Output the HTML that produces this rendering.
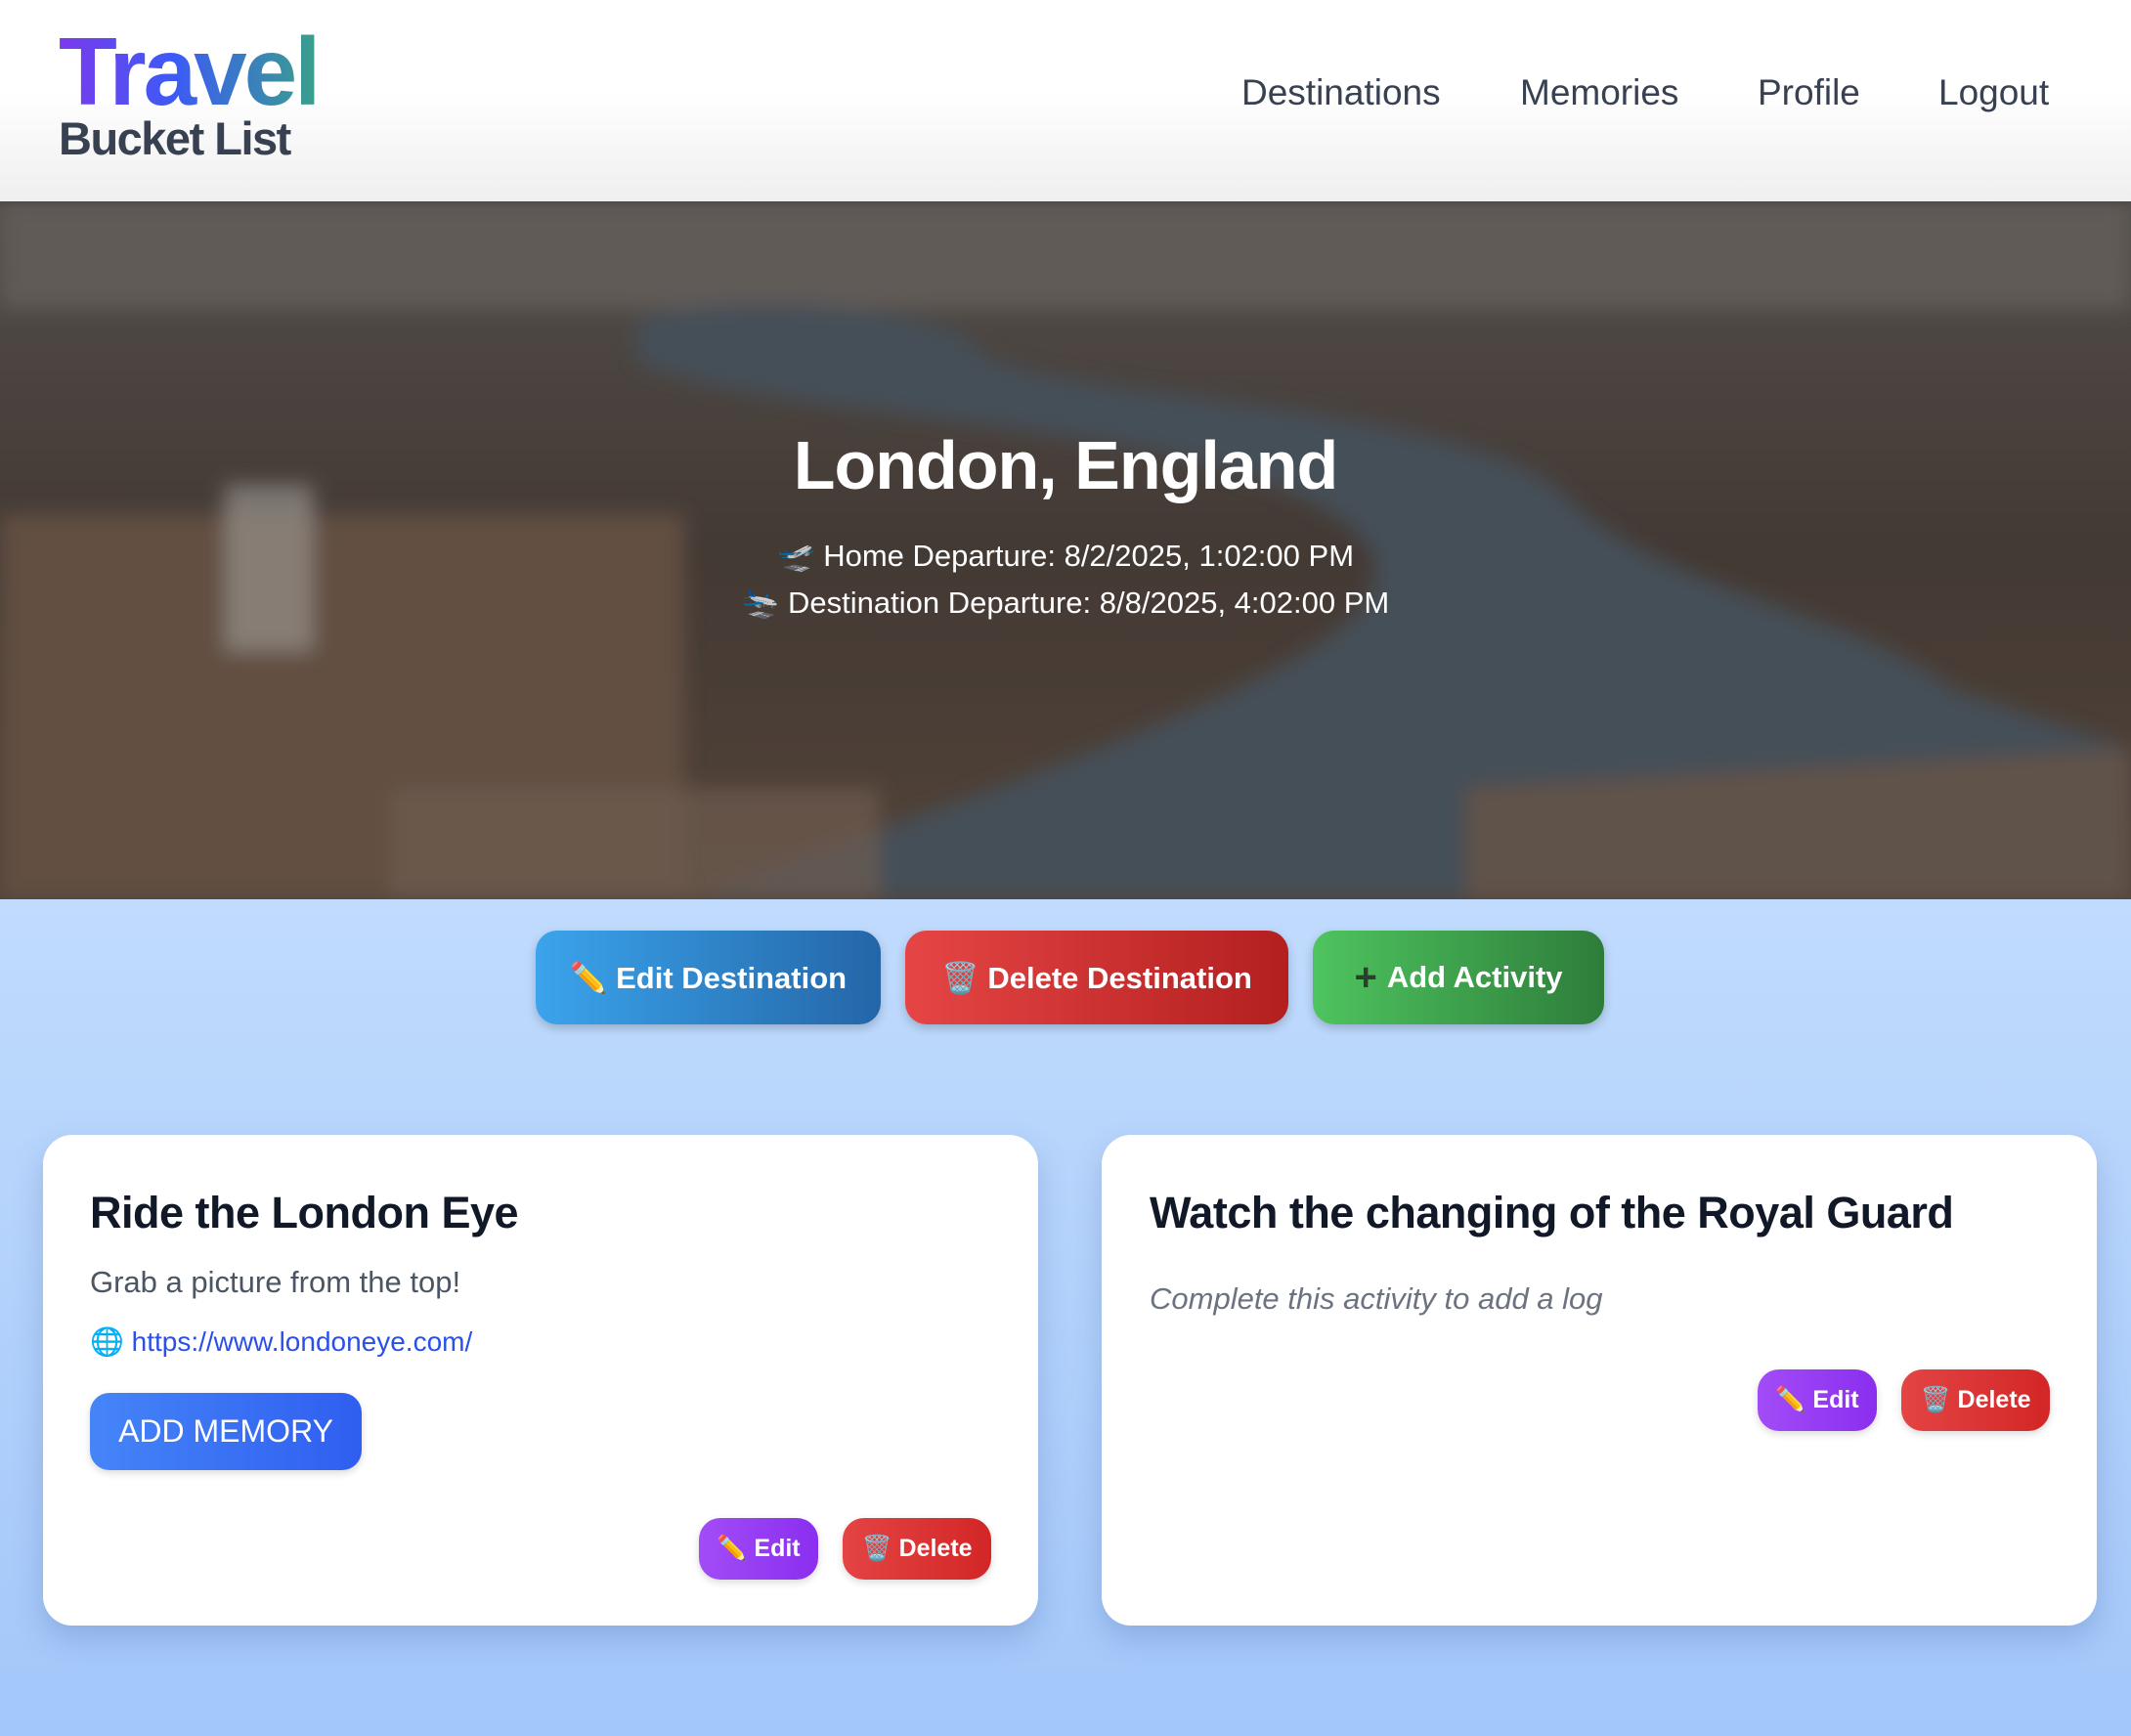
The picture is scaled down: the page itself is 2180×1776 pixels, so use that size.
<!DOCTYPE html>
<html><head><meta charset="utf-8"><style>
*{margin:0;padding:0;box-sizing:border-box}
body{width:2180px;height:1776px;overflow:hidden;font-family:"Liberation Sans",sans-serif;background:linear-gradient(180deg,#c0dbfd 920px,#a3c7fa 1776px);position:relative}
.abs{position:absolute}
header{position:absolute;left:0;top:0;width:2180px;height:206px;background:linear-gradient(180deg,#fff 0%,#fff 45%,#efefef 100%);box-shadow:0 2px 6px rgba(0,0,0,.15);z-index:2}
.logo{left:60px;top:24px;font-size:98px;font-weight:bold;letter-spacing:-3px;background:linear-gradient(90deg,#7c3aed,#3b5bf5 45%,#3aa08a);-webkit-background-clip:text;background-clip:text;color:transparent;line-height:1}
.sub{left:60px;top:114px;font-size:47px;font-weight:bold;color:#374151;letter-spacing:-1.5px}
.nav{top:74px;font-size:37px;color:#374151}
.hero{left:0;top:206px;width:2180px;height:714px;overflow:hidden}
.h1{left:0;width:2180px;text-align:center;top:436px;font-size:70px;font-weight:bold;color:#fff;letter-spacing:-1px}
.dep{left:0;width:2180px;text-align:center;font-size:31px;color:#fff}
.btn{top:952px;height:96px;border-radius:22px;color:#fff;font-size:31px;font-weight:bold;display:flex;align-items:center;justify-content:center;box-shadow:0 4px 10px rgba(0,0,0,.2)}
.card{top:1161px;height:502px;width:1018px;background:#fff;border-radius:30px;box-shadow:0 14px 30px rgba(60,90,150,.25)}
.t{font-size:45px;font-weight:bold;color:#111827;letter-spacing:-.5px}
.sb{height:63px;border-radius:22px;color:#fff;font-size:25px;font-weight:bold;display:flex;align-items:center;justify-content:center;box-shadow:0 3px 8px rgba(0,0,0,.15)}
.ed{background:linear-gradient(90deg,#a24cf7,#8b2ef0)}
.de{background:linear-gradient(90deg,#e44444,#d32626)}
</style></head><body>
<header>
<div class="abs logo">Travel</div>
<div class="abs sub">Bucket List</div>
<div class="abs nav" style="left:1270px">Destinations</div>
<div class="abs nav" style="left:1555px">Memories</div>
<div class="abs nav" style="left:1798px">Profile</div>
<div class="abs nav" style="left:1983px">Logout</div>
</header>
<div class="abs hero">
<svg width="2180" height="714" viewBox="0 0 2180 714">
<defs>
<filter id="b" x="-10%" y="-10%" width="120%" height="120%"><feGaussianBlur stdDeviation="10"/></filter>
<linearGradient id="g" x1="0" y1="0" x2="0" y2="1"><stop offset="0" stop-color="#5e5854"/><stop offset=".5" stop-color="#4d423c"/><stop offset="1" stop-color="#5e4c40"/></linearGradient>
</defs>
<rect width="2180" height="714" fill="url(#g)"/>
<g filter="url(#b)">
<rect x="0" y="0" width="2180" height="110" fill="#6e6864"/>
<rect x="0" y="320" width="700" height="394" fill="#6f5a4b"/>
<path d="M650 120 C760 90 980 110 1000 150 C1030 200 1500 200 1600 300 C1700 400 1900 420 2000 500 L2180 560 L2180 714 L700 714 C900 640 1150 560 1300 480 C1500 380 1400 300 1150 250 C900 210 700 200 650 160 Z" fill="#4f5a64"/>
<path d="M1500 600 L2180 560 L2180 714 L1500 714 Z" fill="#6e5e55"/>
<rect x="230" y="290" width="90" height="170" fill="#b8b2ac" opacity=".6"/>
<rect x="400" y="600" width="500" height="114" fill="#7d6a5c" opacity=".7"/>
</g>
<rect width="2180" height="714" fill="rgba(0,0,0,.12)"/>
</svg>
</div>
<div class="abs h1">London, England</div>
<div class="abs dep" style="top:550px">🛫 Home Departure: 8/2/2025, 1:02:00 PM</div>
<div class="abs dep" style="top:598px">🛬 Destination Departure: 8/8/2025, 4:02:00 PM</div>
<div class="abs btn" style="left:548px;width:353px;background:linear-gradient(90deg,#3ba4ec,#2466a8)">✏️ Edit Destination</div>
<div class="abs btn" style="left:926px;width:392px;background:linear-gradient(90deg,#e64545,#b31f1f)">🗑️ Delete Destination</div>
<div class="abs btn" style="left:1343px;width:298px;background:linear-gradient(90deg,#4ec45f,#2e7d3a)"><span style="color:#2c3e2c;font-size:40px;margin-right:10px">+</span>Add Activity</div>

<div class="abs card" style="left:44px"></div>
<div class="abs t" style="left:92px;top:1215px">Ride the London Eye</div>
<div class="abs" style="left:92px;top:1294px;font-size:31px;color:#4b5563">Grab a picture from the top!</div>
<div class="abs" style="left:92px;top:1356px;font-size:28px;color:#2b50e8">🌐 https://www.londoneye.com/</div>
<div class="abs sb" style="left:92px;top:1425px;width:278px;height:79px;font-size:32px;font-weight:normal;background:linear-gradient(90deg,#4585f8,#2f5ef0);border-radius:20px">ADD MEMORY</div>
<div class="abs sb ed" style="left:715px;top:1553px;width:122px">✏️ Edit</div>
<div class="abs sb de" style="left:862px;top:1553px;width:152px">🗑️ Delete</div>

<div class="abs card" style="left:1127px"></div>
<div class="abs t" style="left:1176px;top:1215px">Watch the changing of the Royal Guard</div>
<div class="abs" style="left:1176px;top:1311px;font-size:31px;color:#6b7280;font-style:italic">Complete this activity to add a log</div>
<div class="abs sb ed" style="left:1798px;top:1401px;width:122px">✏️ Edit</div>
<div class="abs sb de" style="left:1945px;top:1401px;width:152px">🗑️ Delete</div>
</body></html>
